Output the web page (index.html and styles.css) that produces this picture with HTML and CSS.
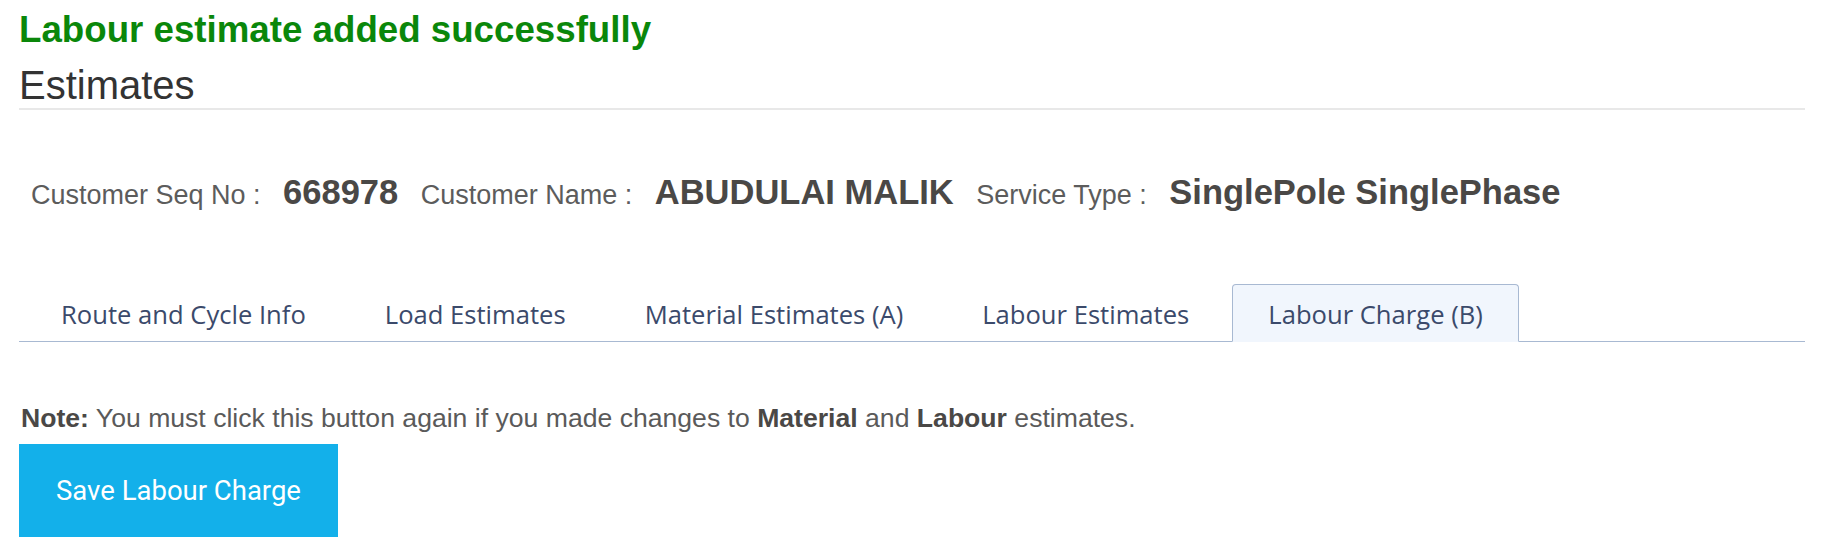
FILE: index.html
```html
<!DOCTYPE html>
<html lang="en">
<head>
<meta charset="utf-8">
<title>Estimates</title>
<link rel="stylesheet" href="styles.css">
</head>
<body>
<div class="page">
  <div class="flash">Labour estimate added successfully</div>
  <h1 class="title">Estimates</h1>

  <div class="customer">
    <span class="label">Customer Seq No :</span>
    <span class="value">668978</span>
    <span class="label">Customer Name :</span>
    <span class="value">ABUDULAI MALIK</span>
    <span class="label">Service Type :</span>
    <span class="value">SinglePole SinglePhase</span>
  </div>

  <ul class="tabs">
    <li class="tab">Route and Cycle Info</li>
    <li class="tab">Load Estimates</li>
    <li class="tab">Material Estimates (A)</li>
    <li class="tab">Labour Estimates</li>
    <li class="tab active">Labour Charge (B)</li>
  </ul>

  <p class="note"><b>Note:</b> You must click this button again if you made changes to <b>Material</b> and <b>Labour</b> estimates.</p>
  <button class="btn" type="button">Save Labour Charge</button>
</div>
</body>
</html>
```
FILE: styles.css
```css
html, body {
  margin: 0;
  padding: 0;
  background: #ffffff;
}

.page {
  margin: 0 24px 0 19px;
  padding-top: 9px;
  font-family: "Liberation Sans", Arial, sans-serif;
}

.flash {
  font-weight: bold;
  font-size: 36.7px;
  line-height: 42px;
  color: #0a870a;
}

.title {
  margin: 11px 0 0;
  font-weight: normal;
  font-size: 40px;
  line-height: 46px;
  color: #333333;
  border-bottom: 2px solid #e8e8e8;
}

.customer {
  display: flex;
  align-items: baseline;
  gap: 22.5px;
  margin-top: 62px;
  padding-left: 12px;
  line-height: 40px;
}

.label {
  font-size: 27px;
  color: #5c5c5c;
}

.value {
  font-size: 34.5px;
  font-weight: bold;
  color: #4a4846;
}

.tabs {
  display: flex;
  gap: 7px;
  list-style: none;
  margin: 69px 0 0;
  padding: 0 0 0 6px;
  border-bottom: 1px solid #a8b9d2;
}

.tab {
  margin-bottom: -1px;
  padding: 12px 35px 9px;
  border: 1px solid transparent;
  border-radius: 4px 4px 0 0;
  font-family: "Open Sans", sans-serif;
  font-size: 25.6px;
  line-height: 35px;
  color: #3b4a6b;
  white-space: nowrap;
}

.tab.active {
  background: #f1f6fd;
  border-color: #a8b9d2;
  border-bottom-color: #f1f6fd;
}

.note {
  margin: 61px 0 0;
  padding-left: 2px;
  font-size: 26.6px;
  line-height: 30px;
  color: #5a5a5a;
}

.note b {
  color: #4a4846;
}

.btn {
  display: block;
  margin-top: 11px;
  width: 319px;
  height: 93px;
  padding: 0;
  border: 0;
  background: #13b0ea;
  color: #ffffff;
  font-family: Roboto, sans-serif;
  font-size: 27.5px;
  line-height: 93px;
  text-align: center;
  cursor: pointer;
}
```
